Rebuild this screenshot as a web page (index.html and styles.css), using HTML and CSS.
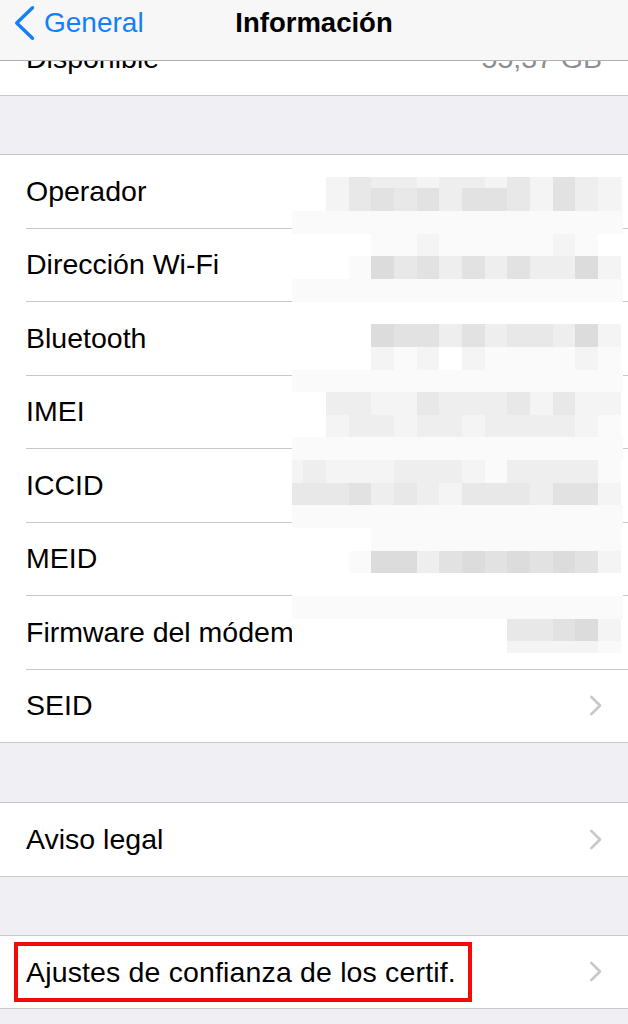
FILE: index.html
```html
<!DOCTYPE html>
<html>
<head>
   <meta charset="utf-8">
   <meta name="viewport" content="width=device-width, initial-scale=1">
   <title>Información</title>
   <link rel="stylesheet" href="styles.css">
</head>
<body>
   <div class="screen">
      <header class="nav">
         <a class="back">
            <svg class="back-icon" width="22" height="36" viewBox="0 0 22 36">
               <path d="M19.5 2.7 L3.7 18 L19.5 33.3" fill="none" stroke="#147efb" stroke-width="3.4" stroke-linecap="round" stroke-linejoin="round"/>
            </svg>
            <span>General</span>
         </a>
         <h1 class="nav-title">Información</h1>
         <div></div>
      </header>

      <div class="peek">
         <div class="row">
            <div class="row-inner">
               <span class="label">Disponible</span>
               <span class="value">55,37 GB</span>
            </div>
         </div>
      </div>

      <section class="group">
         <div class="row"><div class="row-inner"><span class="label">Operador</span></div></div>
         <div class="row"><div class="row-inner"><span class="label">Dirección Wi-Fi</span></div></div>
         <div class="row"><div class="row-inner"><span class="label">Bluetooth</span></div></div>
         <div class="row"><div class="row-inner"><span class="label">IMEI</span></div></div>
         <div class="row"><div class="row-inner"><span class="label">ICCID</span></div></div>
         <div class="row"><div class="row-inner"><span class="label">MEID</span></div></div>
         <div class="row"><div class="row-inner"><span class="label">Firmware del módem</span></div></div>
         <div class="row">
            <div class="row-inner">
               <span class="label">SEID</span>
               <svg class="chevron" width="14" height="21" viewBox="0 0 14 21"><path d="M2.3 1.8 L11 10.5 L2.3 19.2" fill="none" stroke="#c7c7cc" stroke-width="2.6" stroke-linecap="round" stroke-linejoin="round"/></svg>
            </div>
         </div>
      </section>

      <section class="group group-legal">
         <div class="row">
            <div class="row-inner">
               <span class="label">Aviso legal</span>
               <svg class="chevron" width="14" height="21" viewBox="0 0 14 21"><path d="M2.3 1.8 L11 10.5 L2.3 19.2" fill="none" stroke="#c7c7cc" stroke-width="2.6" stroke-linecap="round" stroke-linejoin="round"/></svg>
            </div>
         </div>
      </section>

      <section class="group group-cert">
         <div class="row">
            <div class="row-inner">
               <span class="label highlight">Ajustes de confianza de los certif.</span>
               <svg class="chevron" width="14" height="21" viewBox="0 0 14 21"><path d="M2.3 1.8 L11 10.5 L2.3 19.2" fill="none" stroke="#c7c7cc" stroke-width="2.6" stroke-linecap="round" stroke-linejoin="round"/></svg>
            </div>
         </div>
      </section>

      <!-- pixelated values laid over the list -->
      <div class="mosaic">
         <div class="mosaic-grid" id="mosaic-grid"></div>
      </div>
   </div>

   <script src="mosaic.js"></script>
</body>
</html>
```

FILE: styles.css
```css
body{
   margin: 0;
   background-color: #efeff4;
   font-family: "Liberation Sans", Arial, sans-serif;
   color: #000;
}

.screen{
   position: relative;
   width: 628px;
   min-height: 1024px;
   overflow: hidden;
}

/* nav bar */
.nav{
   display: grid;
   grid-template-columns: 1fr auto 1fr;
   align-items: start;
   height: 57px;
   padding-top: 3px;
   background-color: #f7f7f7;
   border-bottom: 1px solid #b1b1b3;
}

.back{
   display: flex;
   align-items: center;
   height: 40px;
   color: #147efb;
   font-size: 28px;
}

.back-icon{
   margin-left: 13px;
   margin-right: 9px;
}

.nav-title{
   margin: 0;
   line-height: 40px;
   font-size: 27.5px;
   font-weight: 700;
}

/* rows */
.peek{
   display: flex;
   align-items: flex-end;
   height: 34px;
   overflow: hidden;
   background-color: #fff;
   border-bottom: 1px solid #c8c7cc;
}

.peek .row{
   flex: 1;
}

.group{
   margin-top: 58px;
   background-color: #fff;
   border-top: 1px solid #c8c7cc;
   border-bottom: 1px solid #c8c7cc;
}

.group-legal{
   margin-top: 59px;
}

.group-cert{
   margin-top: 58px;
}

.row{
   padding-left: 26px;
}

.row-inner{
   display: flex;
   align-items: center;
   justify-content: space-between;
   height: 72.5px;
   padding-right: 26px;
   font-size: 28.5px;
}

.row + .row .row-inner{
   border-top: 1px solid #c8c7cc;
}

.value{
   color: #8e8e93;
}

.chevron{
   margin-right: -1px;
}

.highlight{
   display: inline-block;
   margin-left: -12px;
   padding: 0 12px 0 8px;
   line-height: 52px;
   letter-spacing: 0.15px;
   border: 4px solid #f50a0a;
}

/* blurred data */
.mosaic{
   position: absolute;
   top: 176.7px;
   left: 291.7px;
   width: 331.6px;
   height: 476px;
   overflow: hidden;
}

.mosaic-grid{
   display: grid;
   grid-template-columns: repeat(16, 22.67px);
   grid-auto-rows: 22.67px;
   margin-left: -11px;
   margin-top: -11.1px;
}

.s0{ background-color: #ffffff; }
.s1{ background-color: #fafafa; }
.s2{ background-color: #f4f4f4; }
.s3{ background-color: #eeeeee; }
.s4{ background-color: #e8e8e9; }
.s5{ background-color: #e2e2e3; }
.s6{ background-color: #dcdcdd; }
```

FILE: mosaic.js
```js
var mosaicRows = [
   '0024332332425321',
   '0024545355425321',
   '1111111111111111',
   '0000112111112100',
   '0001645353533620',
   '1111111111111111',
   '0000000000000000',
   '0000655353443620',
   '0000212021111210',
   '1111111111111111',
   '0033224333424220',
   '0023323323333210',
   '1111111111111111',
   '2322233321333310',
   '4445343244435520',
   '1111111111111111',
   '0000111111111110',
   '0001663565656520',
   '0000000000000000',
   '1111111111111111',
   '0000000000445620',
   '0000000000222210'
];

var mosaicGrid = document.getElementById("mosaic-grid");
mosaicRows.forEach(function (row) {
   for (var i = 0; i < row.length; i++) {
      var cell = document.createElement("div");
      cell.className = "s" + row[i];
      mosaicGrid.appendChild(cell);
   }
});
```
